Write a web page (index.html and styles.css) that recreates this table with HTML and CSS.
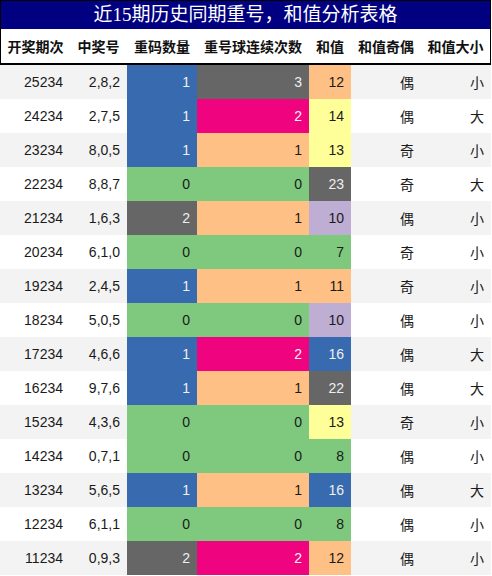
FILE: index.html
```html
<!DOCTYPE html>
<html lang="zh">
  <head>
    <meta charset="UTF-8" />
    <title>近15期历史同期重号，和值分析表格</title>
    <link rel="stylesheet" href="styles.css">
  </head>
  <body>
    <div class="board">
      <!-- Title bar -->
      <div class="title">近15期历史同期重号，和值分析表格</div>

      <table class="stats">
        <thead>
          <tr>
            <th class="c-issue">开奖期次</th>
            <th class="c-nums">中奖号</th>
            <th class="c-rep">重码数量</th>
            <th class="c-run">重号球连续次数</th>
            <th class="c-sum">和值</th>
            <th class="c-odd">和值奇偶</th>
            <th class="c-size">和值大小</th>
          </tr>
        </thead>
        <tbody>
          <tr><td>25234</td><td>2,8,2</td><td class="blue">1</td><td class="gray">3</td><td class="peach">12</td><td>偶</td><td>小</td></tr>
          <tr><td>24234</td><td>2,7,5</td><td class="blue">1</td><td class="pink">2</td><td class="yellow">14</td><td>偶</td><td>大</td></tr>
          <tr><td>23234</td><td>8,0,5</td><td class="blue">1</td><td class="peach">1</td><td class="yellow">13</td><td>奇</td><td>小</td></tr>
          <tr><td>22234</td><td>8,8,7</td><td class="green">0</td><td class="green">0</td><td class="gray">23</td><td>奇</td><td>大</td></tr>
          <tr><td>21234</td><td>1,6,3</td><td class="gray">2</td><td class="peach">1</td><td class="lilac">10</td><td>偶</td><td>小</td></tr>
          <tr><td>20234</td><td>6,1,0</td><td class="green">0</td><td class="green">0</td><td class="green">7</td><td>奇</td><td>小</td></tr>
          <tr><td>19234</td><td>2,4,5</td><td class="blue">1</td><td class="peach">1</td><td class="peach">11</td><td>奇</td><td>小</td></tr>
          <tr><td>18234</td><td>5,0,5</td><td class="green">0</td><td class="green">0</td><td class="lilac">10</td><td>偶</td><td>小</td></tr>
          <tr><td>17234</td><td>4,6,6</td><td class="blue">1</td><td class="pink">2</td><td class="blue">16</td><td>偶</td><td>大</td></tr>
          <tr><td>16234</td><td>9,7,6</td><td class="blue">1</td><td class="peach">1</td><td class="gray">22</td><td>偶</td><td>大</td></tr>
          <tr><td>15234</td><td>4,3,6</td><td class="green">0</td><td class="green">0</td><td class="yellow">13</td><td>奇</td><td>小</td></tr>
          <tr><td>14234</td><td>0,7,1</td><td class="green">0</td><td class="green">0</td><td class="green">8</td><td>偶</td><td>小</td></tr>
          <tr><td>13234</td><td>5,6,5</td><td class="blue">1</td><td class="peach">1</td><td class="blue">16</td><td>偶</td><td>大</td></tr>
          <tr><td>12234</td><td>6,1,1</td><td class="green">0</td><td class="green">0</td><td class="green">8</td><td>偶</td><td>小</td></tr>
          <tr><td>11234</td><td>0,9,3</td><td class="gray">2</td><td class="pink">2</td><td class="peach">12</td><td>偶</td><td>小</td></tr>
        </tbody>
      </table>
    </div>
  </body>
</html>
```

FILE: styles.css
```css
/* Global */
* {
  box-sizing: border-box;
}
body {
  margin: 0;
  background: #fff;
  font-family: "Liberation Sans", Arial, "Noto Sans CJK SC", sans-serif;
  color: #1a1a1a;
}

.board {
  width: 491px;
}

/* Title bar */
.title {
  height: 29px;
  line-height: 27px;
  background: #000080;
  border: 1px solid #000;
  border-bottom: none;
  color: #fff;
  text-align: center;
  font-family: "Liberation Serif", "Noto Sans CJK SC", serif;
  font-size: 19px;
}

/* Table */
.stats {
  width: 491px;
  table-layout: fixed;
  border-collapse: separate;
  border-spacing: 0;
  font-size: 14px;
}
.stats th {
  height: 36px;
  padding: 0;
  font-weight: bold;
  color: #111;
  text-align: center;
  background: #fff;
  border-bottom: 2px solid #000;
}
.stats th:first-child {
  border-left: 1px solid #000;
}
.stats th:last-child {
  border-right: 1px solid #000;
}
.c-issue { width: 70px; }
.c-nums { width: 57px; }
.c-rep { width: 70px; }
.c-run { width: 112px; }
.c-sum { width: 42px; }
.c-odd { width: 70px; }
.c-size { width: 70px; }

.stats td {
  height: 34px;
  padding: 0 7px 0 0;
  text-align: right;
  background: #fff;
}
.stats tbody tr:nth-child(odd) td {
  background: #f3f3f3;
}

/* Value colours (must beat the striped rows) */
.stats tbody tr td.blue { background: #386aaf; color: #f0f0f0; }
.stats tbody tr td.gray { background: #666; color: #eee; }
.stats tbody tr td.pink { background: #f0037f; color: #f6f6f6; }
.stats tbody tr td.peach { background: #ffc086; }
.stats tbody tr td.yellow { background: #ffff99; }
.stats tbody tr td.green { background: #7fc97f; }
.stats tbody tr td.lilac { background: #beaed4; }
```
